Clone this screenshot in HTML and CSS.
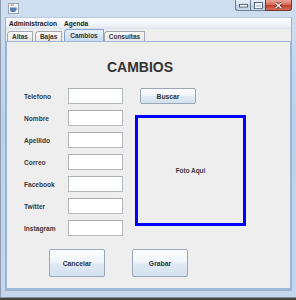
FILE: index.html
```html
<!DOCTYPE html>
<html lang="es">
<head>
  <meta charset="utf-8">
  <title>Cambios</title>
  <link rel="stylesheet" href="styles.css">
</head>
<body>
  <div class="window">
    <div class="titlebar">
      <svg class="app-icon" width="11" height="11" viewBox="0 0 11 11">
        <rect x="0.5" y="0.5" width="10" height="10" fill="#f4f6f9" stroke="#9aa6b4"/>
        <path d="M3 3 q1 -1 0 -2 M5 3 q1 -1 0 -2" stroke="#d2691e" stroke-width="0.8" fill="none"/>
        <path d="M2 4.5 h6 v2.5 q0 2 -3 2 q-3 0 -3 -2 z" fill="#5a7fb0"/>
        <path d="M8 5 q1.5 0 1.2 1.2 q-0.3 0.8 -1.4 0.8" stroke="#5a7fb0" stroke-width="0.7" fill="none"/>
      </svg>
      <div class="controls">
        <span class="ctl ctl-min"><svg width="9" height="5" viewBox="0 0 9 5"><rect x="0.5" y="1.5" width="8" height="2.5" fill="#fff" stroke="#3a4a60" stroke-width="0.8"/></svg></span>
        <span class="ctl ctl-max"><svg width="9" height="7" viewBox="0 0 9 7"><rect x="0.5" y="0.5" width="8" height="6" fill="none" stroke="#3a4a60" stroke-width="0.8"/><rect x="1.6" y="1.8" width="5.8" height="3.8" fill="none" stroke="#fff" stroke-width="1.2"/></svg></span>
        <span class="ctl ctl-close"><svg width="9" height="7" viewBox="0 0 9 7"><path d="M1.5 0.8 L7.5 6.2 M7.5 0.8 L1.5 6.2" stroke="#5a1a10" stroke-width="2.6"/><path d="M1.5 0.8 L7.5 6.2 M7.5 0.8 L1.5 6.2" stroke="#fff" stroke-width="1.4"/></svg></span>
      </div>
    </div>

    <div class="client">
      <div class="menubar">
        <span class="menu-item">Administracion</span>
        <span class="menu-item">Agenda</span>
      </div>

      <div class="tabs">
        <span class="tab">Altas</span>
        <span class="tab">Bajas</span>
        <span class="tab tab-active">Cambios</span>
        <span class="tab">Consultas</span>
      </div>

      <div class="panel">
        <h1 class="title">CAMBIOS</h1>

        <div class="form">
          <div class="fields">
            <label class="lbl">Telefono</label><span class="field"></span>
            <label class="lbl">Nombre</label><span class="field"></span>
            <label class="lbl">Apellido</label><span class="field"></span>
            <label class="lbl">Correo</label><span class="field"></span>
            <label class="lbl">Facebook</label><span class="field"></span>
            <label class="lbl">Twitter</label><span class="field"></span>
            <label class="lbl">Instagram</label><span class="field"></span>
          </div>
          <div class="side">
            <button class="btn btn-search">Buscar</button>
            <div class="photo">Foto Aqui</div>
          </div>
        </div>

        <div class="actions">
          <button class="btn btn-big">Cancelar</button>
          <button class="btn btn-big">Grabar</button>
        </div>
      </div>
    </div>
  </div>
</body>
</html>
```

FILE: styles.css
```css
html,
body {
  margin: 0;
  height: 100%;
}

body {
  background: #4a443c;
  font-family: "Liberation Sans", Arial, sans-serif;
  color: #333;
}

.window {
  box-sizing: border-box;
  width: 296px;
  height: 298px;
  display: flex;
  flex-direction: column;
  padding: 0 4px 6px 4px;
  background: linear-gradient(180deg, #cfdff0 0%, #bcd1e9 40%, #c4d7ec 100%);
  border-left: 1px solid #8e9db0;
  border-bottom: 1px solid #7e8ea4;
}

/* title bar */
.titlebar {
  height: 17px;
  display: flex;
  align-items: flex-start;
}

.app-icon {
  margin: 3px 0 0 3px;
}

.controls {
  margin-left: auto;
  margin-right: 0;
  display: flex;
}

.ctl {
  height: 10px;
  display: flex;
  align-items: center;
  justify-content: center;
  border: 1px solid #6f7f96;
  border-top: 0;
}

.ctl-min,
.ctl-max {
  width: 14px;
  background: linear-gradient(180deg, #e6eef8 0%, #d2deec 50%, #bccde2 51%, #c9d9ec 100%);
}

.ctl-min {
  border-bottom-left-radius: 3px;
  border-right: 0;
}

.ctl-max {
  border-right: 0;
}

.ctl-close {
  width: 25px;
  background: linear-gradient(180deg, #eaa496 0%, #d9705e 45%, #c2412c 55%, #d0705a 100%);
  border-color: #7d3328;
  border-bottom-right-radius: 3px;
}

/* client area */
.client {
  flex: 1;
  display: flex;
  flex-direction: column;
  background: #eeeeee;
  border: 1px solid #9fb2c8;
  border-top: 0;
}

.menubar {
  box-sizing: border-box;
  height: 12px;
  display: flex;
  align-items: center;
  gap: 7px;
  padding-left: 3px;
  background: linear-gradient(180deg, #fbfcfd 0%, #f1f4f8 60%, #e6ebf1 100%);
  border-top: 1px solid #b9c8da;
  border-bottom: 1px solid #dde3ea;
}

.menu-item {
  font-size: 6.6px;
  font-weight: bold;
  color: #222;
}

.tabs {
  height: 12px;
  display: flex;
  align-items: flex-end;
  padding-left: 1px;
}

.tab {
  box-sizing: border-box;
  height: 10px;
  margin-right: 2px;
  padding: 0 4px;
  display: flex;
  align-items: center;
  font-size: 6.5px;
  font-weight: bold;
  color: #333;
  background: linear-gradient(180deg, #fdfdfd 0%, #f0f0f0 50%, #e5e5e5 100%);
  border: 1px solid #a3a9b1;
  border-bottom: 0;
  border-top-left-radius: 4px;
  border-top-right-radius: 1px;
}

.tab-active {
  height: 12px;
  margin-right: 0;
  padding: 0 5px;
  background: linear-gradient(180deg, #e9f1fb 0%, #d3e3f5 60%, #c7dbf1 100%);
  border-color: #7ea3cf;
}

.panel {
  flex: 1;
  display: flex;
  flex-direction: column;
  padding: 17px 0 0 17px;
  background: #eeeeee;
  border: 1px solid #9bb8d9;
  border-bottom-width: 2px;
}

.title {
  margin: 0 34px 13px 0;
  text-align: center;
  font-size: 14px;
  line-height: 16px;
  font-weight: bold;
  color: #333;
}

.form {
  display: flex;
  gap: 12px;
}

.fields {
  display: grid;
  grid-template-columns: 44px 55px;
  grid-auto-rows: 16px;
  row-gap: 6px;
  align-items: center;
}

.lbl {
  font-size: 6.6px;
  font-weight: bold;
  color: #3a3a3a;
}

.field {
  box-sizing: border-box;
  height: 16px;
  background: #fff;
  border: 1px solid #b3b8bf;
  border-top-color: #a9aeb5;
}

.side {
  display: flex;
  flex-direction: column;
}

.btn {
  box-sizing: border-box;
  padding: 0;
  font-family: inherit;
  font-size: 6.8px;
  font-weight: bold;
  color: #333;
  background: linear-gradient(180deg, #fbfcfd 0%, #f1f5f9 45%, #dfe9f4 55%, #d3e1f0 100%);
  border: 1px solid #98a6b6;
  border-radius: 2px;
}

.btn-search {
  width: 56px;
  height: 16px;
  margin-left: 5px;
}

.photo {
  box-sizing: border-box;
  width: 111px;
  height: 111px;
  margin-top: 11px;
  display: flex;
  align-items: center;
  justify-content: center;
  font-size: 6.4px;
  font-weight: bold;
  color: #3a3a3a;
  border: 3px solid #0000ff;
}

.actions {
  display: flex;
  gap: 27px;
  margin-top: 13px;
  padding-left: 25px;
}

.btn-big {
  width: 56px;
  height: 28px;
}
```
